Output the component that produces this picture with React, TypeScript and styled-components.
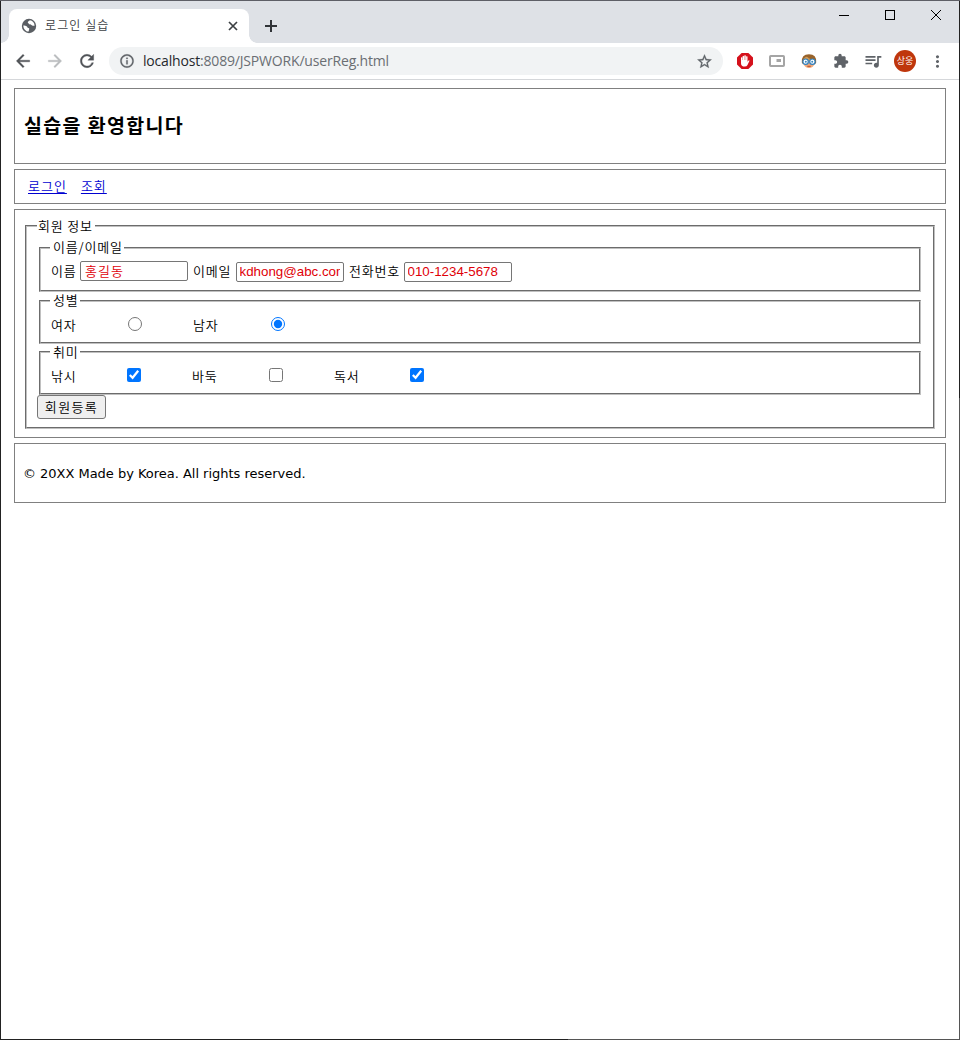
import React from "react";
import styled, { createGlobalStyle } from "styled-components";
import {
  MdArrowBack,
  MdArrowForward,
  MdRefresh,
  MdInfoOutline,
  MdStarBorder,
  MdExtension,
  MdQueueMusic,
  MdMoreVert,
} from "react-icons/md";

const GlobalStyle = createGlobalStyle`
  * { box-sizing: border-box; }
  body { margin: 0; background: #fff; }
`;

const korean = `"Noto Sans CJK KR", sans-serif`;

const Window = styled.div`
  height: 1040px;
  width: 960px;
  padding: 1px;
  display: flex;
  flex-direction: column;
  overflow: hidden;
  background:
    linear-gradient(#5e5f66, #5e5f66) 0 0 / 100% 1px no-repeat,
    linear-gradient(to right, #222 568px, #555 568px) 0 100% / 100% 1px no-repeat,
    linear-gradient(#222 398px, #555 398px) 100% 0 / 1px 100% no-repeat,
    #222;
`;

const TabStrip = styled.header`
  display: flex;
  flex: none;
  height: 42px;
  padding: 8px 0 0 8px;
  background: #dee1e6;
`;

const Tab = styled.div`
  display: flex;
  align-items: center;
  position: relative;
  width: 240px;
  height: 34px;
  padding: 0 10px 0 12px;
  border-radius: 8px 8px 0 0;
  background: #fff;
  &::before,
  &::after {
    content: "";
    position: absolute;
    bottom: 0;
    width: 8px;
    height: 8px;
  }
  &::before {
    left: -8px;
    background: radial-gradient(circle at 0 0, transparent 7.5px, #fff 8px);
  }
  &::after {
    right: -8px;
    background: radial-gradient(circle at 100% 0, transparent 7.5px, #fff 8px);
  }
`;

const TabTitle = styled.span`
  flex: 1;
  margin-left: 8px;
  padding-bottom: 2px;
  font: 350 12px/16px ${korean};
  letter-spacing: 1.1px;
  color: #3c4043;
`;

const NewTab = styled.div`
  display: flex;
  margin: 11px 0 0 16px;
`;

const WindowControls = styled.div`
  display: flex;
  gap: 35px;
  margin-left: auto;
  padding-right: 17px;
`;

const Toolbar = styled.div`
  display: flex;
  align-items: center;
  flex: none;
  height: 37px;
  padding-left: 12px;
  background: #fff;
  border-bottom: 1px solid #d5d7da;
  color: #5f6368;
`;

const NavIcon = styled.span<{ $dim?: boolean }>`
  display: flex;
  width: 32px;
  color: ${(p) => (p.$dim ? "#babcbe" : "#505357")};
  svg path:not([fill="none"]) {
    stroke: currentColor;
    stroke-width: 0.4px;
  }
  svg {
    stroke: none;
  }
`;

const Omnibox = styled.div`
  display: flex;
  align-items: center;
  width: 614px;
  height: 28px;
  padding: 0 10px;
  border-radius: 14px;
  background: #f1f3f4;
  svg {
    stroke: none;
  }
  svg path:not([fill="none"]) {
    stroke: currentColor;
    stroke-width: 0.4px;
  }
`;

const Url = styled.span`
  flex: 1;
  margin-left: 8px;
  font: 14px/20px "Open Sans", sans-serif;
  letter-spacing: -0.18px;
  color: #6a6e73;
  b {
    font-weight: 400;
    color: #25282c;
  }
`;

const Extensions = styled.div`
  display: flex;
  flex: 1;
  align-items: center;
  margin-left: 6px;
`;

const ExtensionSlot = styled.span`
  display: flex;
  justify-content: center;
  width: 32px;
`;

const Avatar = styled.span`
  width: 22px;
  height: 22px;
  border-radius: 50%;
  background: #bf360c;
  color: #fff;
  text-align: center;
  font: 9px/22px ${korean};
`;

const Page = styled.main`
  flex: 1;
  display: flex;
  flex-direction: column;
  gap: 5px;
  padding: 8px 13px;
  background: #fff;
  color: #000;
  font: 350 13px/16px ${korean};
  letter-spacing: 0.8px;
`;

const Box = styled.section<{ $height: number; $pad: string }>`
  height: ${(p) => p.$height}px;
  padding: ${(p) => p.$pad};
  border: 1px solid #808080;
`;

const Title = styled.h2`
  margin: 0;
  font: 700 19.5px/28px ${korean};
  letter-spacing: 1.35px;
`;

const Menu = styled.nav`
  display: flex;
  gap: 14px;
  letter-spacing: 1px;
  a {
    color: #0000d0;
    text-decoration: underline;
    text-underline-offset: 2px;
  }
`;

const Group = styled.fieldset<{ $height: number; $outer?: boolean; $gap?: number }>`
  height: ${(p) => p.$height}px;
  margin: 0 0 ${(p) => p.$gap ?? 0}px;
  min-width: 0;
  padding: ${(p) => (p.$outer ? "0 12px 0 10px" : "0 10px 0 9px")};
  border: 2px groove #c0c0c0;
`;

const Legend = styled.legend<{ $width: number; $inset: number; $line?: number }>`
  width: ${(p) => p.$width}px;
  height: 16px;
  padding: 0 0 0 ${(p) => p.$inset}px;
  line-height: ${(p) => p.$line ?? 16}px;
  white-space: nowrap;
`;

const GroupList = styled.div`
  display: grid;
  margin: 6px 0 0 2px;
`;

const FieldRow = styled.div<{ $columns: string; $top: number }>`
  display: grid;
  grid-template-columns: ${(p) => p.$columns};
  align-items: center;
  margin-top: ${(p) => p.$top}px;
  height: 22px;
  padding-left: 1px;
  white-space: nowrap;
`;

const TextInput = styled.input<{ $hangul?: boolean }>`
  width: 108px;
  height: 20px;
  margin-top: ${(p) => (p.$hangul ? -1 : 1)}px;
  padding: 1px ${(p) => (p.$hangul ? 4 : 3)}px 1px ${(p) => (p.$hangul ? 4 : 2.5)}px;
  border: 1px solid #767676;
  border-radius: 2px;
  background: #fff;
  color: #e00008;
  font: ${(p) => (p.$hangul ? `350 13px ${korean}` : `13.33px "Liberation Sans", sans-serif`)};
  letter-spacing: ${(p) => (p.$hangul ? "1.1px" : "0")};
`;

const Choice = styled.input`
  width: 14px;
  height: 14px;
  margin: -3px 0 0;
`;

const Submit = styled.button`
  display: block;
  width: 69px;
  height: 24px;
  padding: 0;
  border: 1px solid #767676;
  border-radius: 3px;
  background: #efefef;
  color: #000;
  font: 350 13px/20px ${korean};
  letter-spacing: 1.4px;
`;

const Copyright = styled.p`
  margin: 0;
  font: 13px/16px "DejaVu Sans", sans-serif;
  letter-spacing: -0.02px;
`;

const Globe = () => (
  <svg width="16" height="16" viewBox="0 0 16 16">
    <circle cx="8" cy="8" r="7.2" fill="#5a5e63" />
    <path
      d="M2.3 7.5C3.6 7.7 5 7.6 5.9 8.4c.8.7.5 1.5 1.6 1.6.8.1.9.8.6 1.5l-.5 2.1C4.8 13.6 2.4 11 2.3 7.5zM8.8 2.3c-.4.9-1.9.8-2 1.9-.1 1 1 .8 1.1 1.6.2 1 1.9.4 2.5 1.2.6.9 1.9.7 3.2.7C13.5 4.7 11.5 2.5 8.8 2.3z"
      fill="#fff"
    />
  </svg>
);

const StopHand = () => (
  <svg width="18" height="18" viewBox="0 0 18 18">
    <path d="M5.6 1h6.8L17 5.600v6.800L12.400 17H5.600L1 12.400V5.600z" fill="#d5111c" />
    <path
      d="M5 8.500V5.600q.6-.9 1.300 0V8h.3V4.300q.7-.9 1.400 0V8h.3V3.600q.8-.9 1.500 0V8h.3V4.600q.7-.9 1.400 0V9.700l1-1.300q1.200-.4.9.7l-1.900 4q-.8 1.500-2.700 1.500Q5 14.600 5 11.200z"
      fill="#fff"
    />
  </svg>
);

const PictureFrame = () => (
  <svg width="16" height="12" viewBox="0 0 16 12" fill="none">
    <rect x="1" y="1" width="14" height="10" rx=".8" stroke="#a5a5a5" strokeWidth="2" />
    <rect x="7.5" y="4" width="4.5" height="3" fill="#a5a5a5" />
  </svg>
);

const BoyFace = () => (
  <svg width="16" height="16" viewBox="0 0 16 16">
    <path d="M3 8h10v4q-1.5 3-5 3t-5-3z" fill="#efa878" />
    <path d="M.8 9.5Q.2 1.3 8 1.3T15.2 9.5L13.5 12V7h-11v5z" fill="#99632a" />
    <path d="M2 6.500Q5 2.500 7 4.500T14 6.500V8H2z" fill="#d09a55" />
    <circle cx="4.6" cy="8.7" r="2.7" fill="#fff" stroke="#2b7fc0" strokeWidth="1.2" />
    <circle cx="11.4" cy="8.7" r="2.7" fill="#fff" stroke="#2b7fc0" strokeWidth="1.2" />
    <circle cx="4.8" cy="8.7" r="1" fill="#3a86bd" />
    <circle cx="11.2" cy="8.7" r="1" fill="#3a86bd" />
    <path d="M6.3 13.300h3.400" stroke="#b54e30" />
  </svg>
);

export default function App() {
  return (
    <Window>
      <GlobalStyle />
      <TabStrip>
        <Tab>
          <Globe />
          <TabTitle>로그인 실습</TabTitle>
          <svg width="12" height="12" viewBox="0 0 12 12" stroke="#3c4043" strokeWidth="1.7">
            <path d="M2 2l8 8M10 2l-8 8" />
          </svg>
        </Tab>
        <NewTab>
          <svg width="12" height="12" viewBox="0 0 12 12" stroke="#303337" strokeWidth="2">
            <path d="M6 0v12M0 6h12" />
          </svg>
        </NewTab>
        <WindowControls>
          <svg width="11" height="12" viewBox="0 0 11 12" stroke="#000">
            <path d="M0 6.5h10" />
          </svg>
          <svg width="11" height="12" viewBox="0 0 11 12" stroke="#000" fill="none">
            <rect x=".5" y="1.5" width="9" height="9" />
          </svg>
          <svg width="11" height="12" viewBox="0 0 11 12" stroke="#000">
            <path d="M0 1l10 10M10 1l-10 10" />
          </svg>
        </WindowControls>
      </TabStrip>

      <Toolbar>
        <NavIcon><MdArrowBack size={20} /></NavIcon>
        <NavIcon $dim><MdArrowForward size={20} /></NavIcon>
        <NavIcon><MdRefresh size={20} /></NavIcon>
        <Omnibox>
          <MdInfoOutline size={16} />
          <Url><b>localhost</b>:8089/JSPWORK/userReg.html</Url>
          <MdStarBorder size={17} />
        </Omnibox>
        <Extensions>
          <ExtensionSlot><StopHand /></ExtensionSlot>
          <ExtensionSlot><PictureFrame /></ExtensionSlot>
          <ExtensionSlot><BoyFace /></ExtensionSlot>
          <ExtensionSlot><MdExtension size={16} /></ExtensionSlot>
          <ExtensionSlot><MdQueueMusic size={20} /></ExtensionSlot>
          <ExtensionSlot><Avatar>상웅</Avatar></ExtensionSlot>
          <ExtensionSlot><MdMoreVert size={19} /></ExtensionSlot>
        </Extensions>
      </Toolbar>

      <Page>
        <Box $height={76} $pad="22px 9px"><Title>실습을 환영합니다</Title></Box>
        <Box $height={35} $pad="8px 13px">
          <Menu><a href="#login">로그인</a><a href="#search">조회</a></Menu>
        </Box>
        <Box $height={229} $pad="8px 10px">
          <Group $height={211} $outer>
            <Legend $width={58} $inset={1}>회원 정보</Legend>
            <GroupList>
              <Group $height={52} $gap={1}>
                <Legend $width={74} $inset={3} $line={14}>이름/이메일</Legend>
                <FieldRow $top={4} $columns="29px 113px 43px 113px 55px 108px">
                  <span>이름</span>
                  <TextInput $hangul defaultValue="홍길동" />
                  <span>이메일</span>
                  <TextInput defaultValue="kdhong@abc.com" />
                  <span>전화번호</span>
                  <TextInput defaultValue="010-1234-5678" />
                </FieldRow>
              </Group>
              <Group $height={51}>
                <Legend $width={30} $inset={3} $line={14}>성별</Legend>
                <FieldRow $top={5} $columns="77px 65px 78px 14px">
                  <span>여자</span>
                  <Choice type="radio" name="gender" />
                  <span>남자</span>
                  <Choice type="radio" name="gender" defaultChecked />
                </FieldRow>
              </Group>
              <Group $height={51}>
                <Legend $width={30} $inset={3}>취미</Legend>
                <FieldRow $top={5} $columns="76px 65px 77px 65px 76px 14px">
                  <span>낚시</span>
                  <Choice type="checkbox" defaultChecked />
                  <span>바둑</span>
                  <Choice type="checkbox" />
                  <span>독서</span>
                  <Choice type="checkbox" defaultChecked />
                </FieldRow>
              </Group>
            </GroupList>
            <Submit type="button">회원등록</Submit>
          </Group>
        </Box>
        <Box $height={60} $pad="22px 8px">
          <Copyright>© 20XX Made by Korea. All rights reserved.</Copyright>
        </Box>
      </Page>
    </Window>
  );
}
